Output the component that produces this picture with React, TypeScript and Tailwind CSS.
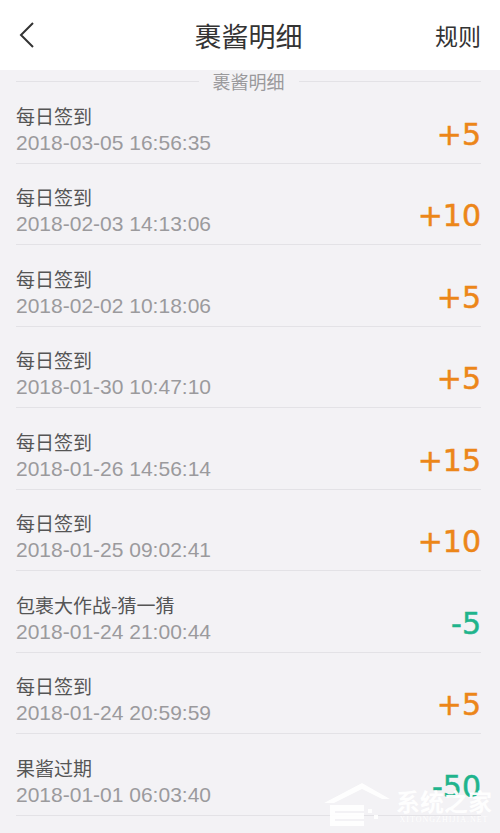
import React from "react";

const rows: { title: string; date: string; amount: string; neg?: boolean }[] = [
  { title: "每日签到", date: "2018-03-05 16:56:35", amount: "+5" },
  { title: "每日签到", date: "2018-02-03 14:13:06", amount: "+10" },
  { title: "每日签到", date: "2018-02-02 10:18:06", amount: "+5" },
  { title: "每日签到", date: "2018-01-30 10:47:10", amount: "+5" },
  { title: "每日签到", date: "2018-01-26 14:56:14", amount: "+15" },
  { title: "每日签到", date: "2018-01-25 09:02:41", amount: "+10" },
  { title: "包裹大作战-猜一猜", date: "2018-01-24 21:00:44", amount: "-5", neg: true },
  { title: "每日签到", date: "2018-01-24 20:59:59", amount: "+5" },
  { title: "果酱过期", date: "2018-01-01 06:03:40", amount: "-50", neg: true },
];

const cjk = { fontFamily: '"Noto Sans CJK SC", "Noto Sans", sans-serif' };

export default function App() {
  return (
    <div className="relative w-[500px] h-[833px] overflow-hidden bg-[#f3f2f5]" style={cjk}>
      <div className="h-[70px] bg-white flex items-center justify-between px-[16px]">
        <svg width="20" height="30" viewBox="0 0 20 30" className="ml-[2px]">
          <path d="M15 3 L3 15 L15 27" fill="none" stroke="#333" strokeWidth="2" />
        </svg>
        <div className="text-[27px] text-[#333] leading-none ml-[24px]">裹酱明细</div>
        <div className="text-[23px] text-[#333] leading-none mr-[3px]">规则</div>
      </div>
      <div className="h-[22px] flex items-center px-[16px] pr-[19px]">
        <div className="flex-1 h-px bg-[#e3e2e6]" />
        <div className="px-[14px] text-[18px] text-[#9a999c] leading-none">裹酱明细</div>
        <div className="flex-1 h-px bg-[#e3e2e6]" />
      </div>
      <div className="mx-[16px] mr-[19px]">
        {rows.map((r, i) => (
          <div
            key={i}
            className={`flex items-end justify-between border-b border-[#e3e2e6] ${i === 0 ? "h-[71.5px]" : "h-[81.5px]"}`}
          >
            <div className="pb-[7px]">
              <div className="text-[19px] leading-[26px] text-[#555]">{r.title}</div>
              <div
                className="text-[21px] leading-[27px] text-[#9b9a9d]"
                style={{ fontFamily: '"Liberation Sans", Arial, sans-serif' }}
              >
                {r.date}
              </div>
            </div>
            <div
              className={`pb-[13px] text-[30px] leading-[30px] [-webkit-text-stroke:0.5px] ${r.neg ? "text-[#1fb48c]" : "text-[#ec8619]"}`}
              style={{ fontFamily: '"DejaVu Sans", sans-serif' }}
            >
              {r.amount}
            </div>
          </div>
        ))}
      </div>
      <div className="absolute right-[8px] bottom-[6px] flex items-end gap-[4px] opacity-95">
        <svg width="70" height="46" viewBox="0 0 70 46">
          <path d="M2 22 L40 2 L68 18 L60 18 L40 8 L12 22 Z" fill="#fff" />
          <rect x="12" y="24" width="30" height="6" fill="#fff" />
          <rect x="12" y="32" width="30" height="6" fill="#fff" />
          <rect x="12" y="40" width="30" height="5" fill="#fff" />
          <rect x="8" y="24" width="5" height="21" fill="#fff" />
          <rect x="46" y="28" width="4" height="4" fill="#fff" />
          <rect x="52" y="34" width="4" height="4" fill="#fff" />
        </svg>
        <div className="flex flex-col items-center pb-[2px]">
          <div className="text-[24px] leading-[28px] text-white font-bold">系统之家</div>
          <div className="text-[8px] leading-[10px] text-white tracking-[1px]" style={{ fontFamily: '"Liberation Serif", serif' }}>
            XITONGZHIJIA.NET
          </div>
        </div>
      </div>
    </div>
  );
}
